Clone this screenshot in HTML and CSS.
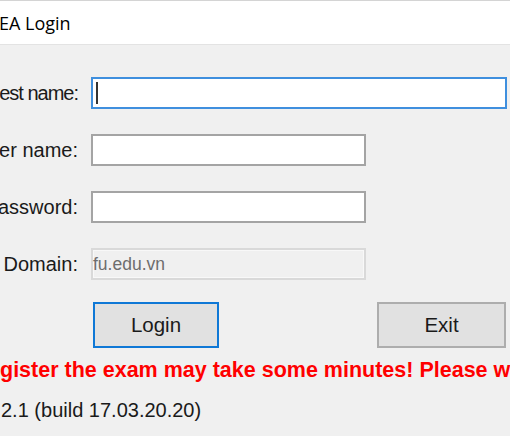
FILE: index.html
```html
<!DOCTYPE html>
<html>
<head>
<meta charset="utf-8">
<title>EA Login</title>
<link rel="stylesheet" href="styles.css">
</head>
<body>
<div class="window">
  <div class="titlebar"><span class="title">EA Login</span></div>
  <div class="content">
    <div class="form">
      <label class="label label-tight">est name:</label>
      <div class="field field-wide field-focus"><span class="caret"></span></div>
      <label class="label">er name:</label>
      <div class="field"></div>
      <label class="label">assword:</label>
      <div class="field"></div>
      <label class="label">Domain:</label>
      <div class="field field-disabled"><span class="field-text">fu.edu.vn</span></div>
    </div>
    <div class="buttons">
      <button class="btn btn-default">Login</button>
      <button class="btn">Exit</button>
    </div>
    <p class="warning">gister the exam may take some minutes! Please wait...</p>
    <p class="version">2.1 (build 17.03.20.20)</p>
  </div>
</div>
</body>
</html>
```
FILE: styles.css
```css
html, body {
  margin: 0;
  padding: 0;
}
body {
  width: 510px;
  height: 436px;
  overflow: hidden;
  background: #f0f0f0;
  font-family: "Liberation Sans", Arial, sans-serif;
  color: #1a1a1a;
}
.window {
  width: 510px;
  height: 436px;
  overflow: hidden;
}
.titlebar {
  height: 43px;
  background: #ffffff;
  border-top: 1px solid #d4d4d4;
  border-bottom: 1px solid #e3e3e3;
  display: flex;
  align-items: center;
}
.title {
  font-family: "Open Sans", "Noto Sans", sans-serif;
  font-size: 18px;
  color: #000;
  margin-left: -1px;
  margin-top: 1px;
}
.content {
  padding-top: 32px;
}
.form {
  display: grid;
  grid-template-columns: 78px auto;
  column-gap: 13px;
  row-gap: 25px;
  align-items: center;
}
.label {
  display: flex;
  justify-content: flex-end;
  white-space: nowrap;
  font-size: 20px;
  color: #1a1a1a;
}
.label-tight {
  letter-spacing: -1px;
}
.field {
  box-sizing: border-box;
  width: 275px;
  height: 32px;
  background: #ffffff;
  border: 2px solid #a4a4a4;
  display: flex;
  align-items: center;
}
.field-wide {
  width: 416px;
}
.field-focus {
  border-color: #3f8fde;
}
.caret {
  width: 2px;
  height: 22px;
  background: #333;
  margin-left: 3px;
}
.field-disabled {
  background: #f0f0f0;
  border-color: #d9d9d9;
  box-shadow: inset 0 0 0 1px #f8f8f8;
}
.field-text {
  font-size: 17.5px;
  color: #6d6d6d;
}
.buttons {
  display: flex;
  justify-content: space-between;
  margin: 22px 4px 0 93px;
}
.btn {
  box-sizing: border-box;
  height: 46px;
  width: 129px;
  background: #e1e1e1;
  border: 2px solid #adadad;
  font-family: "Liberation Sans", Arial, sans-serif;
  font-size: 20.5px;
  color: #1a1a1a;
  padding: 0;
}
.btn-default {
  width: 126px;
  border-color: #0f78d6;
}
.warning {
  margin: 10px 0 0 0;
  font-size: 21.5px;
  line-height: 24px;
  font-weight: bold;
  color: #ff0000;
  white-space: nowrap;
}
.version {
  margin: 16px 0 0 1px;
  font-size: 20px;
  line-height: 24px;
  color: #1a1a1a;
  white-space: nowrap;
}
```
